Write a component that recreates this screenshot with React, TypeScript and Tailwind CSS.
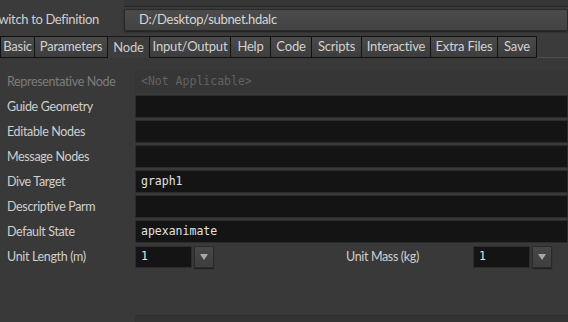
import React from 'react';

const tabs = ['Basic', 'Parameters', 'Node', 'Input/Output', 'Help', 'Code', 'Scripts', 'Interactive', 'Extra Files', 'Save'];
const tabWidths = [35, 74, 43, 82, 41, 42, 51, 70, 68, 40];

interface RowProps {
    label: string;
    value?: string;
    disabled?: boolean;
}

const FieldRow: React.FC<RowProps> = ({ label, value, disabled }) => (
    <div className="flex items-center h-[23px]">
        <div className={`w-[135px] pl-[7px] pt-[1px] text-[12.5px] tracking-[-0.35px] ${disabled ? 'text-[#7c7c7c]' : 'text-[#cfcfcf]'}`}>{label}</div>
        <div
            className={`flex-1 h-[23px] flex items-center pl-[5px] font-['DejaVu_Sans_Mono',monospace] text-[11.5px] border ${disabled
                ? 'bg-[#363636] border-[#363636] text-[#626262]'
                : 'bg-[#141414] border-[#2c2c2c] text-[#e2e2e2]'
                }`}
        >
            {value}
        </div>
    </div>
);

const Dropdown: React.FC<{ value: string }> = ({ value }) => (
    <div className="flex items-center gap-[2px]">
        <div className="w-[57px] h-[22px] bg-[#141414] border border-[#2c2c2c] flex items-center pl-[5px] font-['DejaVu_Sans_Mono',monospace] text-[11.5px] text-[#e2e2e2]">
            {value}
        </div>
        <div className="w-[20px] h-[22px] bg-gradient-to-b from-[#474747] to-[#3e3e3e] border border-[#2a2a2a] rounded-[1px] shadow-[0_1px_1px_rgba(0,0,0,0.5)] flex items-center justify-center">
            <svg width="8" height="6" viewBox="0 0 8 6">
                <path d="M0 0 L8 0 L4 6 Z" fill="#a8a8a8" />
            </svg>
        </div>
    </div>
);

export default function App() {
    return (
        <div className="w-[568px] h-[322px] overflow-hidden bg-[#3b3b3b] font-['Lato','Open_Sans',sans-serif] flex flex-col">
            {/* previous field edge */}
            <div className="ml-[124px] h-[7px] bg-[#363636] border-b border-[#262626]" />

            {/* Switch to Definition */}
            <div className="flex items-center h-[23px] mt-[1px]">
                <div className="w-[132px] shrink-0 ml-[-8px] text-[13px] tracking-[-0.35px] text-[#cfcfcf] whitespace-nowrap">Switch to Definition</div>
                <div className="flex-1 h-[22px] bg-gradient-to-b from-[#4b4b4b] to-[#434343] border border-[#2a2a2a] rounded-[2px] shadow-[0_1px_2px_rgba(0,0,0,0.5)] flex items-center pl-[14px] text-[13px] tracking-[-0.3px] text-[#d6d6d6]">
                    D:/Desktop/subnet.hdalc
                </div>
            </div>

            {/* Tabs */}
            <div className="flex mt-[5px] h-[22px]">
                {tabs.map((t, i) => {
                    const active = t === 'Node';
                    return (
                        <div
                            key={t}
                            style={{ width: tabWidths[i] }}
                            className={`h-[22px] shrink-0 flex items-center justify-center text-[13px] tracking-[-0.2px] border border-[#121212] ${i > 0 ? '-ml-px' : ''} ${active
                                ? 'bg-[#3d3d3d] border-b-0 border-t-[#1a1a1a] text-[#cccccc]'
                                : 'bg-gradient-to-b from-[#4a4a4a] to-[#3d3d3d] text-[#d2d2d2]'
                                }`}
                        >
                            {t}
                        </div>
                    );
                })}
                <div className="flex-1 border-b border-[#4e4e4e]" />
            </div>

            {/* Content pane */}
            <div className="flex-1 bg-[#393939] flex flex-col">
                <div className="h-[12px]" />
                <div className="flex flex-col gap-[2px]">
                    <FieldRow label="Representative Node" value="<Not Applicable>" disabled />
                    <FieldRow label="Guide Geometry" />
                    <FieldRow label="Editable Nodes" />
                    <FieldRow label="Message Nodes" />
                    <FieldRow label="Dive Target" value="graph1" />
                    <FieldRow label="Descriptive Parm" />
                    <FieldRow label="Default State" value="apexanimate" />
                    <div className="flex items-center h-[23px]">
                        <div className="w-[135px] shrink-0 pl-[7px] pt-[1px] text-[12.5px] tracking-[-0.35px] text-[#cfcfcf]">Unit Length (m)</div>
                        <Dropdown value="1" />
                        <div className="w-[132px] shrink-0" />
                        <div className="w-[127px] shrink-0 pt-[1px] text-[12.5px] tracking-[-0.35px] text-[#cfcfcf] whitespace-nowrap">Unit Mass (kg)</div>
                        <Dropdown value="1" />
                    </div>
                </div>
                <div className="flex-1" />
                <div className="ml-[135px] h-[7px] bg-[#333333] border-t border-[#2e2e2e]" />
            </div>
        </div>
    );
}
